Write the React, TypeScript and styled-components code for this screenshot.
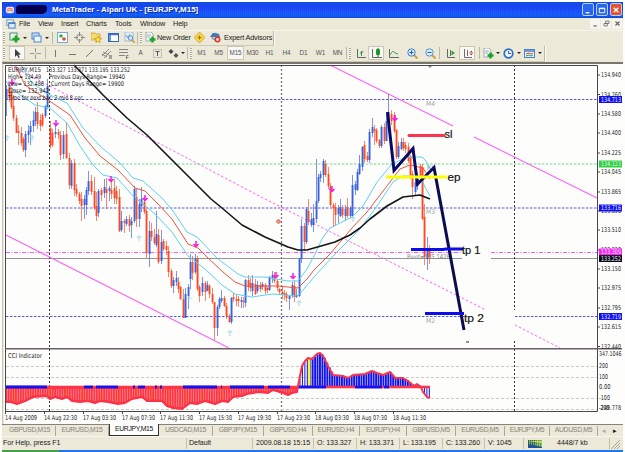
import React from 'react';
import styled, { createGlobalStyle } from 'styled-components';

const Global = createGlobalStyle`
  *{box-sizing:border-box}
  html,body{margin:0;padding:0;background:#fdfefc;overflow:hidden}
  body{font-family:"Liberation Sans",Arial,sans-serif;font-size:7.4px;line-height:1;color:#222}
  svg{display:block;flex:none}
`;

const Window = styled.div`
  width: 621px; height: 452px; margin-left: 2px;
  display: flex; flex-direction: column; background: #ece9d8;
`;
const TitleBar = styled.header`
  height: 18px; border-top: 2px solid #fdfefc; display: flex; align-items: center;
  background: repeating-linear-gradient(90deg, rgba(20,40,190,.16) 0 1px, transparent 1px 2px),
    linear-gradient(#0c53e0 0, #1647f5 25%, #2050ff 55%, #1464fa 80%, #0c50d8 100%);
  background-clip: padding-box; color: #fff; font-weight: bold; font-size: 8px; padding: 0 1px 0 3px;
`;
const Redacted = styled.span`
  width: 31px; height: 9px; margin: 0 5px 0 1px; background: #00004c; border-radius: 4px 3px 5px 2px;
`;
const Title = styled.span`flex: 1; letter-spacing: -.03px; white-space: pre; text-shadow: 1px 1px 0 #0a2d9a;`;
const CaptionButton = styled.span<{ $close?: boolean }>`
  width: 12px; height: 13px; margin-left: 2px; border: 1px solid #b8ccff; border-radius: 2px;
  background: ${p => (p.$close ? '#e2532c' : '#2767ee')};
  display: flex; align-items: center; justify-content: center;
`;
const MenuBar = styled.nav`
  height: 13px; display: flex; align-items: center; padding-left: 4px; border-bottom: 1px solid #f7f5ee;
`;
const MenuItem = styled.span<{ $w: number }>`width: ${p => p.$w}px; letter-spacing: -.12px; font-size: 7.3px;`;
const MdiButtons = styled.div`margin-left: auto; display: flex; gap: 1px; padding-right: 1px; color: #666;`;
const MdiButton = styled.span`
  width: 10px; height: 10px; background: #f6f5ef; display: flex; align-items: center; justify-content: center;
`;
const Toolbar = styled.div<{ $w: number; $h: number }>`
  height: ${p => p.$h}px; width: ${p => p.$w}px; display: flex; align-items: center;
  border-bottom: 1px solid #cfcbb0; border-right: 1px solid #bdb9a4; box-shadow: 1px 0 #fff;
`;
const Slot = styled.span<{ $w: number; $on?: boolean; $align?: string }>`
  width: ${p => p.$w}px; height: 14px; flex: none; display: flex; align-items: center;
  justify-content: ${p => p.$align || 'center'}; white-space: nowrap;
  ${p => p.$on && 'background:#f9f8f4;border:1px solid #c9c6b6;'}
`;
const Period = styled.span`font-size: 6.4px; color: #555; letter-spacing: -.1px;`;
const Label = styled.span`font-size: 7.3px; letter-spacing: -.17px;`;
const Grip = styled.i`
  width: 2px; height: 11px; margin: 0 1px;
  background: repeating-linear-gradient(#aaa692 0 1px, #fff 1px 2px);
`;
const Rule = styled.i`width: 1px; height: 12px; background: #bdb9a6; margin-right: 1px;`;
const Caret = styled.i`border: 2px solid transparent; border-top-color: #222; border-bottom: 0;`;
const ChartFrame = styled.main`
  height: 362px; border-top: 2px solid #77756e; border-left: 1px solid #c6c3b4; padding-left: 1px;
`;
const Tabs = styled.div`
  height: 13px; display: flex; border-top: 1px solid #85837a; padding-left: 2px;
`;
const Tab = styled.span<{ $w: number; $active?: boolean }>`
  width: ${p => p.$w}px; display: flex; align-items: center; justify-content: center;
  font-size: 6.8px; letter-spacing: -.28px; color: #85837a; height: 10px; margin-top: 1px;
  border-right: 1px solid #aaa79a;
  ${p => p.$active && `height:12px;margin-top:-1px;background:#fff;color:#111;
    border:1px solid #333;border-top:0;`}
`;
const TabArrow = styled.span<{ $dim?: boolean }>`
  width: 11px; display: flex; align-items: center; justify-content: center; color: ${p => (p.$dim ? '#aaa' : '#111')};
`;
const StatusBar = styled.footer`
  height: 14px; display: flex; align-items: center; border-top: 1px solid #f8f6ee; padding-left: 1px;
`;
const Cell = styled.span<{ $w: number; $pad?: number; $gap?: number }>`
  width: ${p => p.$w}px; height: 11px; display: flex; align-items: center; flex: none; white-space: nowrap;
  gap: ${p => p.$gap ?? 0}px;
  padding-left: ${p => p.$pad ?? 3}px; border-right: 1px solid #c5c1af; font-size: 7.1px; letter-spacing: -.07px;
`;
const TaskStrip = styled.div`
  height: 2px; background: linear-gradient(90deg, #45a047 0 57px, #1f77ee 57px 100%);
`;

const ICONS: Record<string, React.ReactNode> = {
  app: <><rect x="1" y="2" width="9" height="7" rx="2" fill="#f4e8df" /><path d="M2 5q3-3 7 0M2 7q3-3 7 0" stroke="#d65a4a" fill="none" /></>,
  windows: <><rect x="1" y="1" width="7" height="6" fill="#fff" stroke="#5b8ed0" /><rect x="3" y="4" width="7" height="6" fill="#dcecff" stroke="#3e76c4" /><path d="M3 5h7" stroke="#3e76c4" /></>,
  newchart: <><rect x="1" y="1" width="7" height="7" fill="#e8f2ee" stroke="#4c8f78" /><path d="M7 3.500v7M3.500 7h7" stroke="#17a42b" strokeWidth="2.600" /></>,
  profiles: <><rect x="1" y="1" width="7" height="6" fill="#cfe2fb" stroke="#4d83c8" /><rect x="3" y="4" width="7" height="6" fill="#eef6ff" stroke="#4d83c8" /></>,
  market: <><rect x=".5" y=".5" width="10" height="10" fill="#fff" stroke="#74a8d6" /><circle cx="4" cy="4" r="1.800" fill="#36ae49" /><circle cx="7" cy="7" r="1.800" fill="#e0452f" /></>,
  target: <><circle cx="5.500" cy="5.500" r="3" fill="none" stroke="#888" /><path d="M5.500 0v4M5.500 7v4M0 5.500h4M7 5.500h4" stroke="#888" /></>,
  folder: <><path d="M0 1h4l1 1h4v6H0z" fill="#f6dc6d" stroke="#c39b2d" strokeWidth=".7" /><path d="M7 4l1 2.200 2.600.3-2 1.700.6 2.500L7 9.400l-2.200 1.300.5-2.500-1.900-1.700L6 6.200z" fill="#ffe23c" stroke="#b78a17" strokeWidth=".6" /></>,
  terminal: <><rect x=".5" y="1.500" width="10" height="8" fill="#fff" stroke="#2b66bd" /><path d="M1 2.500h9M2 3v6" stroke="#3d78cf" strokeWidth="1.500" /></>,
  tester: <><rect x="1" y="0" width="8" height="9" fill="#e8f0fa" stroke="#89a9c9" strokeWidth=".7" /><path d="M2 3l2 3 2-4" stroke="#6690c7" fill="none" /><circle cx="6.500" cy="6" r="2.300" fill="#cfe5ff" stroke="#4f7fb5" strokeWidth=".8" /><path d="M8 8l3 3" stroke="#cc9b27" strokeWidth="1.500" /></>,
  order: <><path d="M1 0h5l2 2v7H1z" fill="#fafafa" stroke="#8c9aa5" strokeWidth=".8" /><path d="M2 3h4M2 5h3" stroke="#9ab" /><path d="M7.500 4.500v6M4.500 7.500h6" stroke="#17a42b" strokeWidth="2.400" /></>,
  editor: <><path d="M5.500 0L11 5.500 5.500 11 0 5.500z" fill="#f9d53f" stroke="#c6962a" strokeWidth=".7" /><path d="M3.500 5.500h4M5.500 3.500v4" stroke="#9a721c" /></>,
  expert: <><circle cx="5" cy="4.500" r="3.700" fill="#72a8dc" /><path d="M0 5l3-4 6 1 1 3z" fill="#3f78ba" /><path d="M2 5h5l-1 3z" fill="#f5d66a" /><circle cx="7.500" cy="7.500" r="3" fill="#dc3325" /><rect x="6.300" y="6.300" width="2.400" height="2.400" fill="#fff" /></>,
  cursor: <path d="M3 1v8l2-2 1.500 3 1.300-.6L6.400 6.500H9z" fill="#3d3d3d" />,
  cross: <path d="M5.500 0v4.500M5.500 6.500V11M0 5.500h4.500M6.500 5.500H11" stroke="#9a988f" />,
  vline: <path d="M5.500 2v7" stroke="#77756f" />,
  hline: <path d="M2 6.500h7" stroke="#77756f" />,
  slash: <path d="M2 9l7-7" stroke="#77756f" />,
  channel: <><path d="M1 8l7-7M3 10l7-7M2 4l6 3M1 6l5 3" stroke="#77756f" strokeWidth=".8" /><path d="M8 8h3M8 10h3" stroke="#555" /></>,
  fibo: <><path d="M1 1.500h9M1 4.500h9M1 7.500h6" stroke="#88867e" /><path d="M8.500 11V7.500h2M8.500 9.500h2" stroke="#555" fill="none" strokeWidth=".7" /></>,
  textbox: <><rect x="1.500" y="1.500" width="8" height="8" fill="none" stroke="#999" strokeDasharray="1 1" /><path d="M3.500 3.500h4M5.500 3.500V8" stroke="#555" /></>,
  arrows: <><path d="M3 1l2.500 2.500L3 6 .5 3.500z" fill="#444" /><path d="M8 5l2.500 2.500L8 10 5.500 7.500z" fill="#555" /></>,
  bars: <><path d="M2.500 1v8.500H11" stroke="#5d6d64" fill="none" /><path d="M6.500 3v5M5 5h1.500M6.500 4h2" stroke="#2b9a3c" /></>,
  candles: <><path d="M1.500 1v8.500H11" stroke="#5d6d64" fill="none" /><rect x="5" y="1" width="4" height="6" rx="1" fill="#18a52d" /><path d="M7 0v9" stroke="#167a26" /></>,
  line: <><path d="M1.500 1v8.500H11" stroke="#5d6d64" fill="none" /><path d="M2 7q3-6 5-2l3 1" stroke="#3ea351" fill="none" /></>,
  zoomin: <><path d="M7 7l3.500 3.500" stroke="#d3a23b" strokeWidth="2" /><circle cx="4.500" cy="4.500" r="3.700" fill="#d7ebff" stroke="#3f7fcb" /><path d="M4.500 2.500v4M2.500 4.500h4" stroke="#225fae" /></>,
  zoomout: <><path d="M7 7l3.500 3.500" stroke="#d3a23b" strokeWidth="2" /><circle cx="4.500" cy="4.500" r="3.700" fill="#d7ebff" stroke="#5d93d2" /><path d="M2.500 4.500h4" stroke="#225fae" /></>,
  scroll: <><path d="M2.500 1v8.500H10M5.500 2v6" stroke="#5d6d64" fill="none" /><path d="M6.500 2.500L10 5 6.500 7.500z" fill="#29a33b" /></>,
  shift: <><path d="M2.500 1v8.500H10M5.500 2v6" stroke="#6d6d74" fill="none" /><path d="M10 2.500L6.500 5 10 7.500zM7 4.500h4v1H7z" fill="#b23a2b" /></>,
  clock: <><circle cx="5.500" cy="5.500" r="4.300" fill="#eaf4ff" stroke="#2a6fd0" strokeWidth="1.700" /><path d="M5.500 3v2.500H8" stroke="#333" fill="none" strokeWidth=".8" /></>,
  template: <><rect x=".5" y="1.500" width="10" height="8" fill="#e6f2ff" stroke="#4b82c2" /><path d="M1 3h9" stroke="#4b82c2" strokeWidth="1.500" /><path d="M2 6l3-1 2 1 2-1" stroke="#d0503f" fill="none" /><path d="M2 8l3-1 2 1 2-1" stroke="#2f9c46" fill="none" /></>,
  min: <path d="M3 8.500h4" stroke="currentColor" strokeWidth="1.500" />,
  max: <path d="M2.500 3.500h6v5h-6zM2.500 4h6" stroke="currentColor" fill="none" />,
  restore: <path d="M4.500 2.500h4v3h-4zM2.500 5.500h4v3h-4z" stroke="currentColor" fill="none" />,
  close: <path d="M3 3l5 5M8 3L3 8" stroke="currentColor" strokeWidth="1.500" />,
};
const Icon = ({ k, size = 11 }: { k: string; size?: number }) => (
  <svg width={size} height={size} viewBox="0 0 11 11">{ICONS[k]}</svg>
);

/* x, high, low, body top, body bottom, rising */
type Candle = [number, number, number, number, number, number];
const CANDLES: Candle[] = [
  [6,86,117,90,100,1],[9,84,103,87,99,0],[11,88,110,92,108,0],[13,96,122,107,119,0],[16,116,134,119,134,0],[18,126,146,132,134,0],
  [21,128,147,134,144,0],[23,138,153,140,151,0],[25,132,158,135,151,1],[28,126,144,132,136,1],[30,122,146,127,133,1],[33,112,133,121,127,1],[35,108,127,113,122,1],
  [37,103,130,113,125,0],[40,115,132,121,127,0],[42,114,128,116,126,0],[45,106,119,107,117,1],[47,80,110,87,109,1],[50,122,150,129,147,0],[52,130,148,134,146,0],
  [55,126,139,133,135,1],[58,130,140,133,136,0],[60,132,161,136,156,0],[63,132,160,136,155,1],[66,124,160,135,159,0],[69,154,190,159,186,0],[71,161,190,164,187,1],
  [74,160,197,164,191,0],[76,185,198,190,195,0],[79,193,205,195,202,0],[81,193,222,200,207,0],[84,196,220,200,206,1],[86,188,216,191,206,1],[88,172,196,182,192,1],
  [91,176,196,182,193,0],[94,178,211,192,209,0],[96,193,222,207,217,0],[98,190,218,192,214,1],[101,189,202,191,196,0],[104,180,199,188,194,1],[106,179,210,190,194,0],
  [109,187,202,189,192,1],[111,181,200,191,195,0],[114,180,205,189,199,0],[116,187,205,192,200,0],[119,190,233,198,232,0],[121,212,233,222,231,1],[124,220,234,222,224,0],
  [126,217,227,220,225,1],[129,216,233,220,227,0],[131,218,239,222,226,1],[134,187,224,190,222,1],[136,190,228,198,220,0],[139,200,228,205,220,1],[141,188,213,200,207,1],
  [144,198,215,203,213,0],[146,210,259,212,254,0],[149,222,268,232,255,1],[151,224,242,232,238,0],[154,230,246,238,244,0],[156,212,248,235,246,1],[158,230,265,236,263,0],
  [161,231,265,243,262,1],[163,240,252,242,250,0],[166,242,256,247,251,0],[168,247,278,252,273,0],[171,270,289,272,287,0],[173,278,294,281,287,1],[176,272,287,279,283,1],
  [178,278,294,283,290,0],[180,287,301,288,300,0],[183,290,319,300,319,0],[185,289,319,295,319,1],[188,285,310,288,297,1],[190,255,290,263,280,1],[192,257,281,263,274,0],
  [195,255,275,260,273,1],[197,257,292,260,290,0],[199,286,303,288,297,0],[202,278,297,284,293,1],[205,282,302,284,293,0],[207,282,292,286,292,1],[209,285,299,287,295,0],
  [212,289,305,295,303,0],[214,303,341,303,329,0],[217,306,337,308,329,1],[219,298,310,300,308,1],[221,291,304,299,302,1],[224,297,308,299,307,0],[226,304,320,307,317,0],
  [229,315,324,317,323,0],[231,298,325,299,323,1],[233,294,303,298,300,0],[236,296,307,300,302,0],[238,297,308,300,302,0],[241,298,309,301,303,1],[243,298,309,302,303,0],
  [245,280,308,281,304,1],[248,276,292,281,288,0],[250,279,293,284,289,0],[252,276,297,284,292,1],[255,280,296,285,295,0],[257,282,294,286,292,1],[260,283,293,286,290,0],
  [262,283,291,285,288,1],[265,284,295,286,292,0],[267,288,294,289,291,0],[269,277,292,278,291,1],[272,272,284,276,280,1],[274,273,284,277,282,0],[277,280,292,282,289,0],
  [279,289,296,290,293,0],[282,287,300,293,295,0],[284,291,301,294,296,0],[286,293,303,295,299,0],[289,296,311,297,300,1],[292,283,299,286,297,1],[294,281,303,287,298,0],
  [296,290,299,296,298,1],[299,259,298,259,297,1],[301,220,264,227,260,1],[304,224,252,227,243,0],[306,208,245,210,243,1],[308,200,226,212,223,0],[311,214,228,220,226,1],
  [313,205,233,219,226,1],[316,160,224,202,220,1],[318,175,204,178,202,1],[320,172,183,175,179,1],[323,160,184,162,176,1],[325,161,178,165,176,0],[328,168,190,175,187,0],
  [330,184,208,187,206,0],[333,204,228,206,209,0],[335,204,227,208,216,0],[338,206,224,209,215,1],[340,200,218,208,217,1],[342,206,219,210,216,0],[345,206,222,210,217,1],
  [347,199,219,208,217,0],[350,207,219,209,217,1],[352,176,219,186,217,1],[355,182,196,185,191,1],[357,170,192,173,191,1],[359,156,176,165,175,1],[362,147,172,148,168,1],
  [364,142,164,146,160,0],[367,153,163,157,161,0],[369,130,164,133,161,1],[372,119,138,128,134,1],[374,126,146,130,132,0],[376,129,144,131,142,0],[379,140,149,141,147,0],
  [381,126,149,128,147,1],[384,124,145,128,142,0],[386,115,142,122,142,1],[388,95,130,113,122,1],[391,111,126,115,122,0],[394,113,134,116,132,0],[396,130,160,131,158,0],
  [398,143,160,147,158,1],[401,139,151,143,150,1],[403,139,152,143,149,0],[405,143,154,146,150,0],[408,144,164,148,162,0],[410,156,180,158,177,0],[412,172,200,175,188,0],
  [415,176,197,183,193,1],[417,174,191,180,187,1],[420,165,179,167,177,0],[422,165,221,168,220,0],[424,205,266,218,258,0],[427,238,271,250,260,1],[429,246,265,252,258,0],
];
const MID = '15,66 25,86 48,101 70,116 85,139 100,157 118,171 135,189 145,192 158,205 172,220 188,245 198,249 208,259 223,273 235,283 245,287 262,287 278,287 298,289 307,280 314,271 330,255 352,229 367,213 387,187 400,170 410,166 423,169 430,180';
const UPPER = '21,66 32,84 48,95 67,104 83,129 100,147 120,164 133,179 143,182 163,200 173,212 187,233 197,238 218,260 238,275 245,278 265,278 288,282 298,282 307,270 314,257 322,240 330,229 352,218 363,207 377,183 392,165 407,158 422,158 426,162 430,170';
const LOWER = '6,82 10,88 20,96 35,106 50,109 67,124 80,147 93,166 103,176 117,179 133,197 143,205 155,215 172,233 188,257 205,270 222,286 235,295 252,298 272,295 298,297 314,278 335,255 360,230 377,207 393,183 403,177 420,177 425,188 430,197';
const SLOW = '74,66 103,96 127,119 147,136 159,148 174,163 190,179 211,200 222,209 242,226 265,238 288,248 298,251 307,251 314,249 335,243 350,236 360,229 370,220 387,207 403,198 420,196 430,200';
const CCI: [number, number][] = [[5,403],[11,403],[17,405],[25,402],[33,398],[47,397],[50,400],[55,398],[62,400],[67,398],[72,402],[80,403],[88,402],[95,404],[100,402],[108,403],[118,405],[125,404],[132,400],[142,398],[147,402],[155,402],[162,402],[167,407],[173,409],[182,410],[190,404],[197,405],[205,402],[215,405],[222,402],[228,403],[233,398],[242,397],[247,395],[258,393],[268,394],[273,391],[283,394],[288,396],[292,394],[297,393],[298,387],[302,367],[305,362],[308,359],[312,360],[317,355],[320,354],[323,357],[328,367],[333,376],[343,377],[348,379],[353,376],[365,375],[372,372],[377,374],[383,376],[390,373],[395,379],[403,379],[408,382],[414,387],[417,385],[421,388],[423,393],[427,398],[430,399]];
const cciAt = (x: number) => {
  const i = CCI.findIndex(p => p[0] >= x);
  const [a, b] = [CCI[Math.max(0, i - 1)], CCI[i]];
  return a === b ? b[1] : a[1] + ((b[1] - a[1]) * (x - a[0])) / (b[0] - a[0]);
};
const pts = (a: [number, number][]) => a.map(p => p.join(',')).join(' ');
const BLUE_RUNS = [[5,47],[84,93],[96,118],[133,135],[138,145],[155,157],[160,162],[183,217],[221,222],[230,264],[268,290],[297,326],[355,382],[384,389]];
const PRICES: [string, number][] = [['134.940',76],['134.760',95.5],['134.580',115],['134.400',134],['134.225',154],['134.045',173],['133.865',193],['133.690',212],['133.510',231],['133.330',251],['133.150',270],['132.975',289],['132.795',309],['132.615',328],['132.440',347.5]];
const TAGS: [string, number, string][] = [['134.713',100.5,'#1010f0'],['134.123',165,'#2ed23c'],['133.716',209,'#1010f0'],['133.309',253,'#ff22f4'],['133.252',259.5,'#0a0a18'],['132.719',317.5,'#1010f0']];
const TIMES: [string, number, number][] = [['14 Aug 2009',5,32],['14 Aug 22:30',44,33],['17 Aug 03:30',83,33],['17 Aug 07:30',122,33],['17 Aug 11:30',160,33],['17 Aug 15:30',199,33],['17 Aug 19:30',238,33],['17 Aug 23:30',277,33],['18 Aug 03:30',315,34],['18 Aug 07:30',354,33],['18 Aug 11:30',393,33]];
const INFO: [string, number, number, number][] = [
  ['EURJPY,M15',8,71,33],['133.327 133.371 133.195 133.252',46,71,84],['High= 134.49',8,77.5,33],['Previous Days Range= 19940',49,77.5,76],
  ['Low= 132.486',8,84.5,36],['Current Days Range= 19900',51,84.5,73],['Close= 132.942',8,91.5,41],['Time for next bar: 2 min 8 sec',8,99,75]];

const T = ({ x, y, w, s = 6.6, fill = '#1c1c1c', children }: { x: number; y: number; w?: number; s?: number; fill?: string; children: string }) => (
  <text x={x} y={y + s * 0.37} fontSize={s} fill={fill} textLength={w} lengthAdjust="spacingAndGlyphs">{children}</text>
);
const Arrow = ({ x, y, up }: { x: number; y: number; up?: boolean }) => (
  <path d={up ? `M${x} ${y + 3}v-5M${x - 2.5} ${y}l2.5-2.5 2.5 2.5` : `M${x} ${y - 3}v5M${x - 2.5} ${y}l2.5 2.5 2.5-2.5`}
    stroke={up ? '#9fd3ea' : '#f716ec'} strokeWidth={up ? 1 : 1.5} fill="none" />
);

const Chart = () => (
  <svg width="619" height="360" viewBox="4 65 619 360" fontFamily="'DejaVu Sans Condensed', 'DejaVu Sans', sans-serif">
    <rect x="4" y="65" width="619" height="360" fill="#fdfefc" />
    <g fill="none">
      {[[100.5,'#5358e8'],[165,'#74d58c'],[209,'#5358e8'],[317.5,'#5358e8']].map(([y, c]) => (
        <path key={y} d={y === 317.5 ? `M6 ${y}H464M515 ${y}H597` : `M6 ${y}H597`} stroke={c as string} strokeDasharray="2.5 1.5" />
      ))}
      <path d="M6 253.500H462M491 253.500H597" stroke="#f85af2" strokeDasharray="4 1.5 1 1.5" />
      <path d="M6 259.500H462M491 259.500H597" stroke="#929292" />
      <path d="M49.500 66V412M514.500 66V311M514.500 342V412" stroke="#333" strokeDasharray="2 2" />
      <path d="M281.500 66V412" stroke="#777" strokeWidth="1.3" strokeDasharray="2 2" />
      <path d="M330 66L453 127M474 138L597 199M6 236L229 349" stroke="#fb66f2" strokeWidth="1.2" />
      <path d="M10 66L265 200 486 311M515 326L560 349" stroke="#fb66f2" strokeDasharray="2.5 2" />
    </g>
    {[['M4',104.5],['M3',213],['M2',321.5]].map(([t, y]) => <T key={t} x={426} y={y as number} w={9} s={6.4} fill="#a5a5a5">{t as string}</T>)}
    <T x={427} y={169} s={6.2} fill="#8b9a90">R1</T>
    <T x={407} y={257.5} w={43} s={6.4} fill="#888">Pivot=135.1428</T>
    <g>
      {CANDLES.map(([x, h, l, a, b, up], i) => (
        <g key={i} fill={up ? '#3a62dd' : '#fb4a24'}>
          <rect x={x + 0.1} y={h} width=".9" height={l - h} opacity=".75" />
          <rect x={x - 0.4} y={a} width="1.9" height={Math.max(1, b - a)} />
        </g>
      ))}
    </g>
    <g fill="none" strokeLinejoin="round">
      <polyline points={UPPER} stroke="#5fd0f0" /><polyline points={LOWER} stroke="#5fd0f0" />
      <polyline points={MID} stroke="#f4523e" />
      <polyline points={SLOW} stroke="#141414" strokeWidth="1.6" />
    </g>
    {[[12,83],[56,124],[111,180],[145,199],[196,245],[276,276],[293,277],[332,190],[395,119]].map(([x, y]) => <Arrow key={x} x={x} y={y} />)}
    {[[32,139],[7,139],[139,239],[189,300],[230,334],[299,304],[353,220]].map(([x, y]) => <Arrow key={x} x={x} y={y} up />)}
    <circle cx="278.5" cy="222.5" r="1.7" fill="#ffb09c" stroke="#e3422e" />
    <path d="M427 66h6l-3 3z" fill="#888" />
    {INFO.map(([t, x, y, w]) => <T key={t} x={x} y={y} w={w} s={6.5}>{t}</T>)}
    <g fill="none">
      <path d="M409 136.500H444" stroke="#fb3450" strokeWidth="3" strokeLinecap="round" />
      <path d="M387.500 113L394 171.500 413 149.500 417.500 185 434 168.500 464 331" stroke="#0a0a66" strokeWidth="3" />
      <path d="M434 168L464 331" stroke="#11112e" strokeWidth="1" />
      <path d="M386 178H447" stroke="#fbff00" strokeWidth="3" />
      <path d="M411 250.500H443L446 250H463M425 314.500H464" stroke="#0d0de8" strokeWidth="3" />
      <path d="M466 343h3" stroke="#222" />
    </g>
    <g fill="#111" stroke="#111" strokeWidth=".2" fontSize="11.5" fontFamily="Liberation Sans, Arial, sans-serif">
      <text x="444.500" y="138.500" textLength="8" lengthAdjust="spacingAndGlyphs">sl</text>
      <text x="447.500" y="182" textLength="13" lengthAdjust="spacingAndGlyphs">ep</text>
      <text x="462" y="255" textLength="18.500" lengthAdjust="spacingAndGlyphs">tp 1</text>
      <text x="464" y="322.500" textLength="20" lengthAdjust="spacingAndGlyphs">tp 2</text>
    </g>
    <path d="M6 367.500H597M6 378.500H597M6 399.500H597M6 410.500H597" stroke="#c9cac6" strokeDasharray="3 2" />
    <T x={8} y={356.5} w={34}>CCI Indicator</T>
    <polygon points={`5,388 ${pts(CCI.slice(0, 42))} 297,388`} fill="#ff3446" />
    {Array.from({ length: 118 }, (_, i) => 7 + i * 2.45).filter(x => x < 296).map((x, i) => (
      <rect key={x} x={x} y="390" width=".7" height={Math.max(0, cciAt(x) - 391.5)} fill={i % 7 === 3 ? '#ffa726' : '#ff9a9c'} />
    ))}
    {Array.from({ length: 54 }, (_, i) => 299.5 + i * 2.44).map(x => {
      const y = cciAt(x);
      return <rect key={x} x={x} y={Math.min(y, 388)} width={x < 309 || x > 421 ? 1 : 1.9} height={Math.abs(388 - y)} fill="#1212ee" />;
    })}
    <rect x="308" y="360" width="2.5" height="27" fill="#fff533" />
    <path d="M5 388H430" stroke="#ff3446" strokeWidth="2.6" />
    {BLUE_RUNS.map(([a, b]) => <path key={a} d={`M${a} 388H${b}`} stroke="#1212f2" strokeWidth="2.8" />)}
    <polyline points={pts(CCI)} fill="none" stroke="#fb3349" strokeWidth="2" strokeLinejoin="round" />
    <g fill="none" stroke="#4b454b">
      <path d="M5.500 412.500V66.500H597.500V412.500H5" />
      <path d="M5 349.800H622" stroke="#6b5f69" strokeWidth="1.6" />
      {PRICES.map(([t, y]) => <path key={t} d={`M598 ${y}h2`} />)}
      {TIMES.map(([t, x]) => <path key={t} d={`M${x + 0.5} 412v3`} />)}
    </g>
    {PRICES.map(([t, y]) => <T key={t} x={601} y={y} w={20}>{t}</T>)}
    {TAGS.map(([t, y, c]) => (
      <g key={t}><rect x="599" y={y - 3.5} width="23" height="7" fill={c} /><T x={601} y={y} w={20} s={6.4} fill="#e8ecff">{t}</T></g>
    ))}
    <T x={599} y={355} w={22.5}>347.1046</T><T x={599} y={366.5} w={9}>200</T><T x={599} y={377.5} w={9}>100</T>
    <T x={599} y={388} w={11.5}>0.00</T><T x={599} y={399} w={11}>-100</T><T x={599} y={409} w={10}>-200</T><T x={599} y={408.5} w={22}>-249.778</T>
    {TIMES.map(([t, x, w]) => <T key={t} x={x} y={418.5} w={w}>{t}</T>)}
  </svg>
);

const TABS: [string, number][] = [['GBPUSD,M15',52],['EURUSD,M15',53],['EURJPY,M15',50],['USDCAD,M15',54],['GBPJPY,M15',51],['GBPUSD,H4',49],['EURUSD,H4',47],['EURJPY,H4',47],['GBPUSD,M5',49],['EURUSD,M5',49],['EURJPY,M5',45],['AUDUSD,M5',48]];

export default function App() {
  return (
    <>
      <Global />
      <Window>
        <TitleBar>
          <Icon k="app" size={10} /><Redacted />
          <Title>MetaTrader - Alpari UK - [EURJPY,M15]</Title>
          <CaptionButton><Icon k="min" size={10} /></CaptionButton>
          <CaptionButton><Icon k="max" size={10} /></CaptionButton>
          <CaptionButton $close><Icon k="close" size={10} /></CaptionButton>
        </TitleBar>
        <MenuBar>
          <Slot $w={13} $align="flex-start"><Icon k="windows" size={10} /></Slot>
          {([['File',19],['View',23],['Insert',25],['Charts',29],['Tools',25],['Window',33],['Help',20]] as [string, number][]).map(([t, w]) => <MenuItem key={t} $w={w}>{t}</MenuItem>)}
          <MdiButtons>{['min', 'restore', 'close'].map(k => <MdiButton key={k}><Icon k={k} size={9} /></MdiButton>)}</MdiButtons>
        </MenuBar>
        <Toolbar $w={272} $h={16}>
          <Grip />
          <Slot $w={16}><Icon k="newchart" /></Slot><Slot $w={5}><Caret /></Slot>
          <Slot $w={18}><Icon k="profiles" /></Slot><Slot $w={4}><Caret /></Slot><Slot $w={3} /><Rule />
          <Slot $w={16}><Icon k="market" /></Slot><Slot $w={18}><Icon k="target" /></Slot>
          <Slot $w={17}><Icon k="folder" /></Slot><Slot $w={17}><Icon k="terminal" /></Slot>
          <Slot $w={15}><Icon k="tester" /></Slot><Rule /><Grip />
          <Slot $w={14}><Icon k="order" /></Slot><Slot $w={35} $align="flex-start"><Label>New Order</Label></Slot>
          <Slot $w={14}><Icon k="editor" /></Slot><Slot $w={18}><Icon k="expert" /></Slot>
          <Slot $w={47} $align="flex-start"><Label>Expert Advisors</Label></Slot>
        </Toolbar>
        <Toolbar $w={543} $h={16}>
          <Grip /><Slot $w={3} />
          <Slot $w={16} $on><Icon k="cursor" /></Slot><Slot $w={20}><Icon k="cross" /></Slot><Rule />
          {['vline', 'hline', 'slash', 'channel', 'fibo'].map(k => <Slot key={k} $w={17}><Icon k={k} /></Slot>)}
          <Slot $w={17}><Period>A</Period></Slot><Slot $w={17}><Icon k="textbox" /></Slot>
          <Slot $w={14}><Icon k="arrows" /></Slot><Slot $w={6}><Caret /></Slot><Slot $w={1} /><Rule /><Grip />
          {['M1', 'M5', 'M15', 'M30', 'H1', 'H4', 'D1', 'W1', 'MN'].map(p => <Slot key={p} $w={17} $on={p === 'M15'}><Period>{p}</Period></Slot>)}
          <Rule /><Grip />
          <Slot $w={16}><Icon k="bars" /></Slot><Slot $w={16} $on><Icon k="candles" /></Slot><Slot $w={19}><Icon k="line" /></Slot>
          <Slot $w={19}><Icon k="zoomin" /></Slot><Slot $w={17}><Icon k="zoomout" /></Slot><Rule />
          <Slot $w={18}><Icon k="scroll" /></Slot><Slot $w={16} $on><Icon k="shift" /></Slot><Slot $w={4} /><Rule />
          <Slot $w={14}><Icon k="order" /></Slot><Slot $w={5}><Caret /></Slot>
          <Slot $w={17}><Icon k="clock" /></Slot><Slot $w={4}><Caret /></Slot>
          <Slot $w={17}><Icon k="template" /></Slot><Slot $w={4}><Caret /></Slot>
        </Toolbar>
        <ChartFrame><Chart /></ChartFrame>
        <Tabs>
          {TABS.map(([t, w]) => <Tab key={t} $w={w} $active={t === 'EURJPY,M15'}>{t}</Tab>)}
          <TabArrow $dim>◂</TabArrow><TabArrow>▸</TabArrow>
        </Tabs>
        <StatusBar>
          <Cell $w={184} $pad={0}>For Help, press F1</Cell><Cell $w={66} $pad={2}>Default</Cell><Cell $w={61}>2009.08.18 15:15</Cell>
          <Cell $w={43}>O: 133.327</Cell><Cell $w={43}>H: 133.371</Cell><Cell $w={43}>L: 133.195</Cell><Cell $w={42}>C: 133.260</Cell><Cell $w={39}>V: 1045</Cell>
          <Cell $w={86} $pad={4} $gap={15}>
            <svg width="14" height="8" viewBox="0 0 14 8">
              {[0, 2, 4, 6, 8, 10, 12].map(x => <rect key={x} x={x} y="0" width="1.5" height="8" fill={x < 7 ? '#1d6b3a' : '#4c9b3c'} />)}
              <path d="M0 1h14v2z" fill="#d8d24a" /><path d="M0 4l14 3v1H0z" fill="#244f9c" />
            </svg>
            4448/7 kb
          </Cell>
          <svg width="10" height="10" viewBox="0 0 10 10"><path d="M1 10l9-9M4 10l6-6M7 10l3-3" stroke="#a9a695" /></svg>
        </StatusBar>
        <TaskStrip />
      </Window>
    </>
  );
}
